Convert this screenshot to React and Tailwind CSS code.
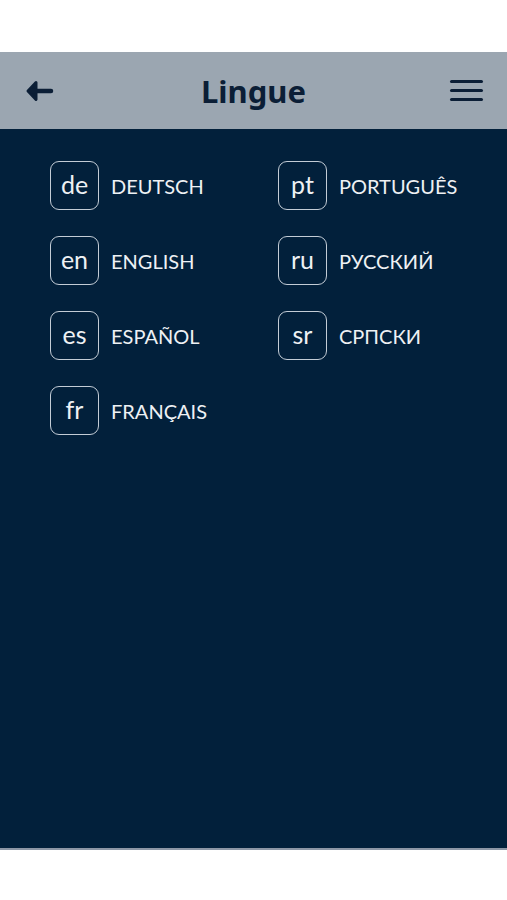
import React from "react";

const left = [
  ["de", "DEUTSCH"],
  ["en", "ENGLISH"],
  ["es", "ESPAÑOL"],
  ["fr", "FRANÇAIS"],
];
const right = [
  ["pt", "PORTUGUÊS"],
  ["ru", "РУССКИЙ"],
  ["sr", "СРПСКИ"],
];

function Item({ code, name }) {
  return (
    <div className="flex items-center h-[49px]">
      <div className="w-[49px] h-[49px] rounded-[9px] border-[1.5px] border-[#c3ccd6] flex items-center justify-center text-[25px] leading-none text-[#eef1f4] pb-[3px]">
        {code}
      </div>
      <div className="ml-[12px] text-[20px] leading-none text-[#eef1f4]">{name}</div>
    </div>
  );
}

export default function App() {
  return (
    <div className="w-[507px] h-[900px] bg-white flex flex-col" style={{ fontFamily: "Lato, 'Noto Sans', sans-serif" }}>
      <div className="h-[52px] shrink-0 bg-white" />
      <div className="h-[77px] shrink-0 bg-[#9ba6b1] flex items-center justify-between px-[25px] relative">
        <svg width="29" height="22" viewBox="0 0 29 22" className="mt-[1px]">
          <path d="M11 2.5 L3 11 L11 19.5 Z" fill="#0b1e36" stroke="#0b1e36" strokeWidth="3" strokeLinejoin="round" />
          <path d="M6 11 H26" fill="none" stroke="#0b1e36" strokeWidth="4.5" strokeLinecap="round" />
        </svg>
        <div className="absolute left-0 right-0 text-center text-[31px] font-bold text-[#0b1e36] pointer-events-none leading-none mt-[2px]" style={{ fontFamily: "'Noto Sans', sans-serif" }}>
          Lingue
        </div>
        <div className="flex flex-col gap-[6px] mr-[-1px]">
          <div className="w-[33px] h-[3px] rounded-full bg-[#0b1e36]" />
          <div className="w-[33px] h-[3px] rounded-full bg-[#0b1e36]" />
          <div className="w-[33px] h-[3px] rounded-full bg-[#0b1e36]" />
        </div>
      </div>
      <div className="h-[719px] shrink-0 bg-[#02203b] flex pt-[32px] pl-[50px]">
        <div className="w-[228px] flex flex-col gap-[26px]">
          {left.map(([c, n]) => (
            <Item key={c} code={c} name={n} />
          ))}
        </div>
        <div className="flex flex-col gap-[26px]">
          {right.map(([c, n]) => (
            <Item key={c} code={c} name={n} />
          ))}
        </div>
      </div>
      <div className="h-[2px] shrink-0 bg-[#8d97a6]" />
      <div className="flex-1 bg-white" />
    </div>
  );
}
